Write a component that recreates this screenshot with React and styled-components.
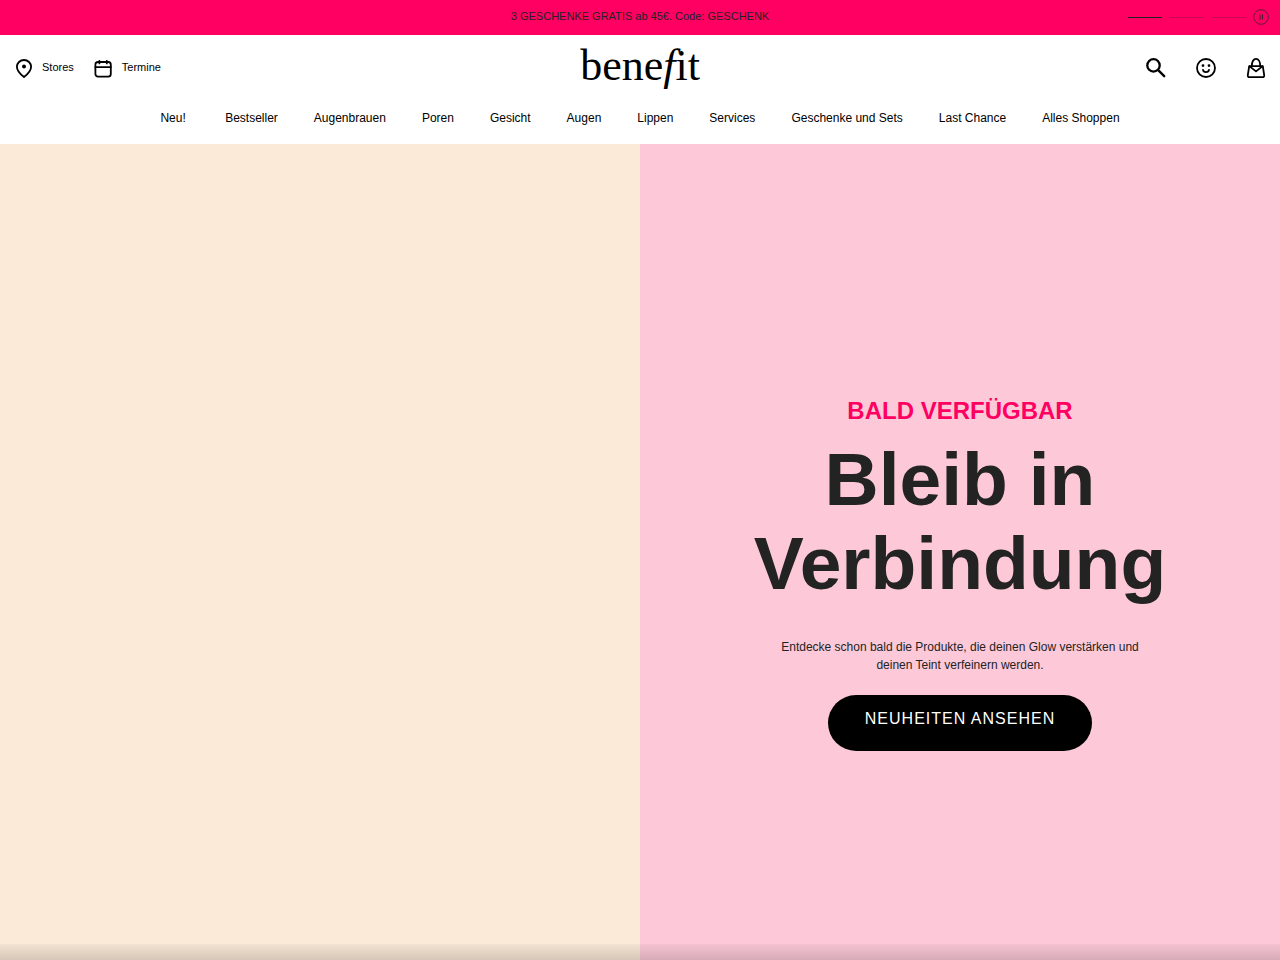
import { styled, createGlobalStyle } from "styled-components";

const links = [
  "Neu!\u00a0",
  "Bestseller",
  "Augenbrauen",
  "Poren",
  "Gesicht",
  "Augen",
  "Lippen",
  "Services",
  "Geschenke und Sets",
  "Last Chance",
  "Alles Shoppen",
];

const PinIcon = () => (
  <Icon viewBox="0 -1 20 20" $size={20}>
    <path d="M10 18C8.6 16.9 2.9 12.8 2.9 7.8A7.1 6.8 0 0 1 17.1 7.8C17.1 12.8 11.4 16.9 10 18Z" />
    <circle cx="10" cy="7.6" r="1.1" fill="#000" />
  </Icon>
);

const CalendarIcon = () => (
  <Icon viewBox="1 -1 20 20" $size={20}>
    <rect x="2.4" y="3" width="15.4" height="14.6" rx="2.6" />
    <path d="M2.4 8.2H17.8M6.4 1.8V4.4M13.8 1.8V4.4" />
  </Icon>
);

const SearchIcon = () => (
  <Icon viewBox="0 0 24 24" $size={24}>
    <circle cx="9.5" cy="9.4" r="6.2" strokeWidth="2.3" />
    <path d="M14.2 14.2L20.2 20.2" strokeWidth="2.4" />
  </Icon>
);

const SmileIcon = () => (
  <Icon viewBox="0 0 24 24" $size={24}>
    <circle cx="12" cy="12" r="9" />
    <circle cx="9" cy="9.6" r="0.8" fill="#000" strokeWidth="1.2" />
    <circle cx="15" cy="9.6" r="0.8" fill="#000" strokeWidth="1.2" />
    <path d="M9 13.9C9.4 16.8 14.6 16.8 15 13.9" />
  </Icon>
);

const BagIcon = () => (
  <Icon viewBox="0 0 24 24" $size={24}>
    <path d="M5.2 10.2H18.8L20.2 19.2Q20.4 21.2 18.6 21.2H5.4Q3.6 21.2 3.8 19.2Z" />
    <path d="M7.8 10C7.8 5.7 9.6 2.8 12 2.8S16.2 5.7 16.2 10" />
    <path d="M5.6 10.4L12 15.4L18.4 10.4" />
  </Icon>
);

const PauseIcon = () => (
  <svg width="16" height="16" viewBox="0 0 16 16" fill="none" stroke="#232323">
    <circle cx="8" cy="8" r="7.3" strokeWidth="0.7" />
    <path d="M7 5.4V10.6M9.4 5.4V10.6" strokeWidth="0.9" />
  </svg>
);

const App = () => {
  return (
    <>
      <GlobalStyle />
      <Page>
        <Banner>
          <BannerText>3 GESCHENKE GRATIS ab 45€. Code: GESCHENK</BannerText>
          <BannerControls>
            <Bars>
              <Bar $active />
              <Bar />
              <Bar />
            </Bars>
            <IconButton aria-label="Pause">
              <PauseIcon />
            </IconButton>
          </BannerControls>
        </Banner>
        <Header>
          <TopRow>
            <Utility>
              <UtilityLink href="#stores">
                <PinIcon />
                <UtilityText>Stores</UtilityText>
              </UtilityLink>
              <UtilityLink href="#termine">
                <CalendarIcon />
                <UtilityText>Termine</UtilityText>
              </UtilityLink>
            </Utility>
            <Logo href="#home">
              bene<em>f</em>it
            </Logo>
            <Actions>
              <IconButton aria-label="Suche">
                <SearchIcon />
              </IconButton>
              <IconButton aria-label="Konto">
                <SmileIcon />
              </IconButton>
              <IconButton aria-label="Warenkorb">
                <BagIcon />
              </IconButton>
            </Actions>
          </TopRow>
          <Nav>
            {links.map((link) => (
              <NavLink key={link} href="#shop">
                {link}
              </NavLink>
            ))}
          </Nav>
        </Header>
        <Hero>
          <Media />
          <Content>
            <Eyebrow>BALD VERFÜGBAR</Eyebrow>
            <Title>Bleib in Verbindung</Title>
            <Text>
              Entdecke schon bald die Produkte, die deinen Glow verstärken und
              deinen Teint verfeinern werden.
            </Text>
            <Cta href="#neuheiten">NEUHEITEN ANSEHEN</Cta>
          </Content>
        </Hero>
        <BottomShade />
      </Page>
    </>
  );
};

export default App;

const GlobalStyle = createGlobalStyle`
  * {
    box-sizing: border-box;
  }
  body {
    margin: 0;
    background-color: #fff;
    color: #000;
    font-family: "Liberation Sans", Arial, sans-serif;
  }
  a {
    color: inherit;
    text-decoration: none;
  }
`;

const Page = styled.div`
  min-height: 100vh;
  display: flex;
  flex-direction: column;
`;

const Banner = styled.div`
  display: grid;
  grid-template-columns: 1fr auto 1fr;
  align-items: center;
  min-height: 35px;
  padding: 0 11px;
  background-color: #ff0062;
`;
const BannerText = styled.p`
  grid-column: 2;
  margin: 0;
  padding-bottom: 4px;
  font-size: 11px;
  line-height: 16px;
  color: #232323;
`;
const BannerControls = styled.div`
  display: flex;
  align-items: center;
  justify-content: flex-end;
  gap: 7px;
  padding-bottom: 1px;
`;
const Bars = styled.div`
  display: flex;
  gap: 8px;
`;
const Bar = styled.span`
  width: 34px;
  height: 1px;
  background-color: #232323;
  opacity: ${({ $active }) => ($active ? 1 : 0.25)};
`;

const Icon = styled.svg`
  width: ${({ $size }) => $size}px;
  height: ${({ $size }) => $size}px;
  fill: none;
  stroke: #000;
  stroke-width: 1.8;
  stroke-linecap: round;
  stroke-linejoin: round;
`;
const IconButton = styled.button`
  display: flex;
  padding: 0;
  border: none;
  background: none;
  cursor: pointer;
`;

const Header = styled.header`
  background-color: #fff;
`;
const TopRow = styled.div`
  display: grid;
  grid-template-columns: 1fr auto 1fr;
  align-items: center;
  height: 66px;
  padding: 0 14px;
`;
const Utility = styled.div`
  display: flex;
  gap: 20px;
`;
const UtilityLink = styled.a`
  display: flex;
  align-items: center;
  gap: 8px;
`;
const UtilityText = styled.span`
  padding-bottom: 2px;
  font-size: 11px;
  line-height: 16px;
`;
const Logo = styled.a`
  padding-bottom: 4px;
  font-family: "Liberation Serif", "Times New Roman", serif;
  font-size: 44px;
  line-height: 48px;
`;
const Actions = styled.div`
  display: flex;
  justify-content: flex-end;
  gap: 26px;
  margin-right: -2px;
`;
const Nav = styled.nav`
  display: flex;
  flex-wrap: wrap;
  justify-content: center;
  gap: 0 36px;
  padding: 8px 16px 17px;
`;
const NavLink = styled.a`
  font-size: 12px;
  line-height: 18px;
`;

const Hero = styled.main`
  flex: 1;
  display: grid;
  grid-template-columns: 1fr 1fr;
`;
const Media = styled.div`
  background-color: #fbead8;
`;
const Content = styled.section`
  display: flex;
  flex-direction: column;
  align-items: center;
  justify-content: center;
  padding: 40px 80px 0;
  background-color: #fdc9d8;
  color: #232323;
  text-align: center;
`;
const Eyebrow = styled.p`
  margin: 0 0 8px;
  font-size: 24px;
  font-weight: 700;
  line-height: 36px;
  color: #ff0062;
`;
const Title = styled.h1`
  max-width: 440px;
  margin: 0 0 33px;
  font-size: 75px;
  line-height: 84px;
`;
const Text = styled.p`
  max-width: 380px;
  margin: 0 0 21px;
  font-size: 12px;
  line-height: 18px;
`;
const Cta = styled.a`
  padding: 12px 37px 20px;
  border-radius: 28px;
  background-color: #000;
  color: #fff;
  font-size: 16px;
  line-height: 24px;
  letter-spacing: 1px;
`;

const BottomShade = styled.div`
  position: fixed;
  right: 0;
  bottom: 0;
  left: 0;
  height: 16px;
  background: linear-gradient(rgba(0, 0, 0, 0.03), rgba(0, 0, 0, 0.15));
  pointer-events: none;
`;
